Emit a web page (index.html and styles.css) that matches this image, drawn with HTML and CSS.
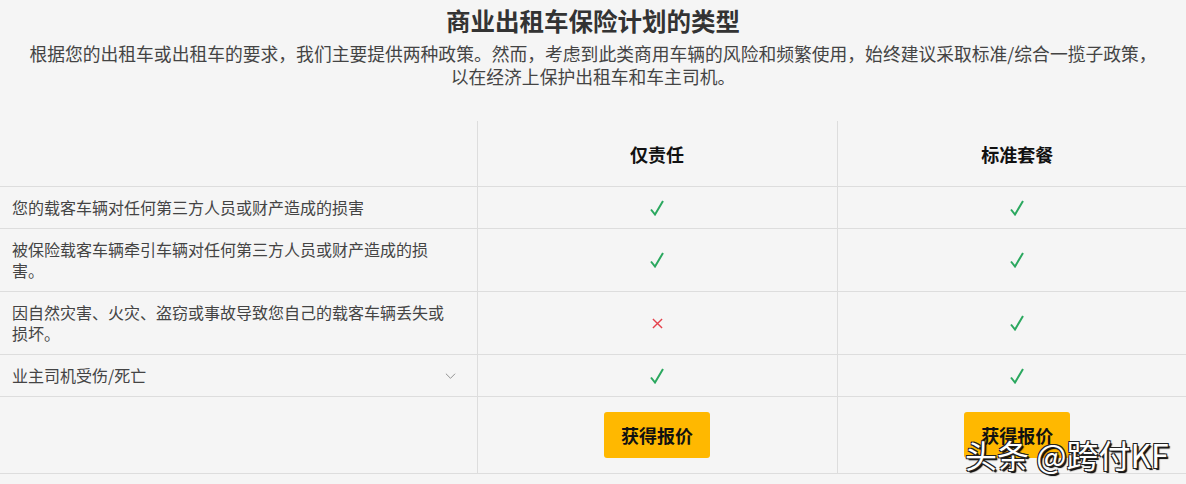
FILE: index.html
```html
<!DOCTYPE html>
<html lang="zh">
<head>
    <meta charset="UTF-8">
    <title>商业出租车保险计划的类型</title>
    <link rel="stylesheet" href="styles.css">
</head>
<body>
    <div class="intro">
        <h2>商业出租车保险计划的类型</h2>
        <p>根据您的出租车或出租车的要求，我们主要提供两种政策。然而，考虑到此类商用车辆的风险和频繁使用，始终建议采取标准/综合一揽子政策，以在经济上保护出租车和车主司机。</p>
    </div>

    <table class="plans">
        <colgroup>
            <col class="c-label">
            <col class="c-plan">
            <col class="c-plan">
        </colgroup>
        <tr class="head">
            <th></th>
            <th>仅责任</th>
            <th>标准套餐</th>
        </tr>
        <tr>
            <td class="label"><div class="text">您的载客车辆对任何第三方人员或财产造成的损害</div></td>
            <td><svg class="yes" viewBox="0 0 14 16"><path d="M1 9.5 L5 14.5 L13 1"/></svg></td>
            <td><svg class="yes" viewBox="0 0 14 16"><path d="M1 9.5 L5 14.5 L13 1"/></svg></td>
        </tr>
        <tr>
            <td class="label"><div class="text">被保险载客车辆牵引车辆对任何第三方人员或财产造成的损害。</div></td>
            <td><svg class="yes" viewBox="0 0 14 16"><path d="M1 9.5 L5 14.5 L13 1"/></svg></td>
            <td><svg class="yes" viewBox="0 0 14 16"><path d="M1 9.5 L5 14.5 L13 1"/></svg></td>
        </tr>
        <tr>
            <td class="label"><div class="text">因自然灾害、火灾、盗窃或事故导致您自己的载客车辆丢失或损坏。</div></td>
            <td><svg class="no" viewBox="0 0 12 12"><path d="M1 1 L11 11 M11 1 L1 11"/></svg></td>
            <td><svg class="yes" viewBox="0 0 14 16"><path d="M1 9.5 L5 14.5 L13 1"/></svg></td>
        </tr>
        <tr>
            <td class="label">
                <div class="more">
                    <div class="text">业主司机受伤/死亡</div>
                    <svg class="chev" viewBox="0 0 12 8"><path d="M1 1.5 L6 6.5 L11 1.5"/></svg>
                </div>
            </td>
            <td><svg class="yes" viewBox="0 0 14 16"><path d="M1 9.5 L5 14.5 L13 1"/></svg></td>
            <td><svg class="yes" viewBox="0 0 14 16"><path d="M1 9.5 L5 14.5 L13 1"/></svg></td>
        </tr>
        <tr class="actions">
            <td></td>
            <td><button type="button">获得报价</button></td>
            <td><button type="button">获得报价</button></td>
        </tr>
    </table>

    <div class="mark">头条 @跨付KF</div>
</body>
</html>
```

FILE: styles.css
```css
html, body {
    margin: 0;
    background: #f5f5f5;
    overflow: hidden;
}
body {
    position: relative;
    height: 484px;
    font-family: "Noto Sans CJK SC", "Noto Sans", sans-serif;
    color: #444;
}

/* 상단 제목 + 설명 */
div.intro {
    width: 1140px;
    margin: 0 auto;
    text-align: center;
}
div.intro h2 {
    margin: 0;
    padding-top: 5px;
    font-size: 24.5px;
    line-height: 32px;
    color: #333;
}
div.intro p {
    margin: 5px 0 0;
    font-size: 17.8px;
    line-height: 23px;
    color: #444;
}

/* 비교 표 */
table.plans {
    margin-top: 33px;
    width: 1197px;
    table-layout: fixed;
    border-collapse: collapse;
}
col.c-label { width: 477px; }
col.c-plan  { width: 360px; }

table.plans th,
table.plans td {
    border-bottom: 1px solid #ddd;
    border-left: 1px solid #ddd;
    text-align: center;
    vertical-align: middle;
    padding: 0;
}
table.plans tr > :first-child {
    border-left: none;
}
tr.head th {
    height: 65px;
    font-size: 18px;
    font-weight: bold;
    color: #111;
}
td.label {
    text-align: left !important;
    padding: 10px 20px 10px 12px !important;
    font-size: 16px;
    line-height: 21px;
    color: #444;
}
td.label .text {
    max-width: 434px;
}
div.more {
    display: flex;
    justify-content: space-between;
    align-items: center;
}
svg.chev {
    width: 11px;
    height: 8px;
    margin-right: 1px;
    fill: none;
    stroke: #888;
    stroke-width: 1;
}
svg.yes {
    display: block;
    margin: 0 auto;
    width: 14px;
    height: 16px;
    fill: none;
    stroke: #2ba85f;
    stroke-width: 2;
}
svg.no {
    display: block;
    margin: 0 auto;
    width: 11px;
    height: 11px;
    fill: none;
    stroke: #e5414b;
    stroke-width: 1.5;
}
tr.actions td {
    padding: 15px 0 !important;
}
tr.actions button {
    width: 106px;
    height: 46px;
    border: none;
    border-radius: 3px;
    background: #ffb800;
    font-family: inherit;
    font-size: 18px;
    font-weight: bold;
    color: #111;
    cursor: pointer;
}

/* 워터마크 */
div.mark {
    position: absolute;
    left: 965px;
    top: 433px;
    font-size: 32px;
    line-height: 42px;
    color: #fff;
    text-shadow: 1px 1px 0 #222, -1px 1px 0 #222, 1px -1px 0 #222, -1px -1px 0 #222, 2px 2px 1px #000;
}
```
